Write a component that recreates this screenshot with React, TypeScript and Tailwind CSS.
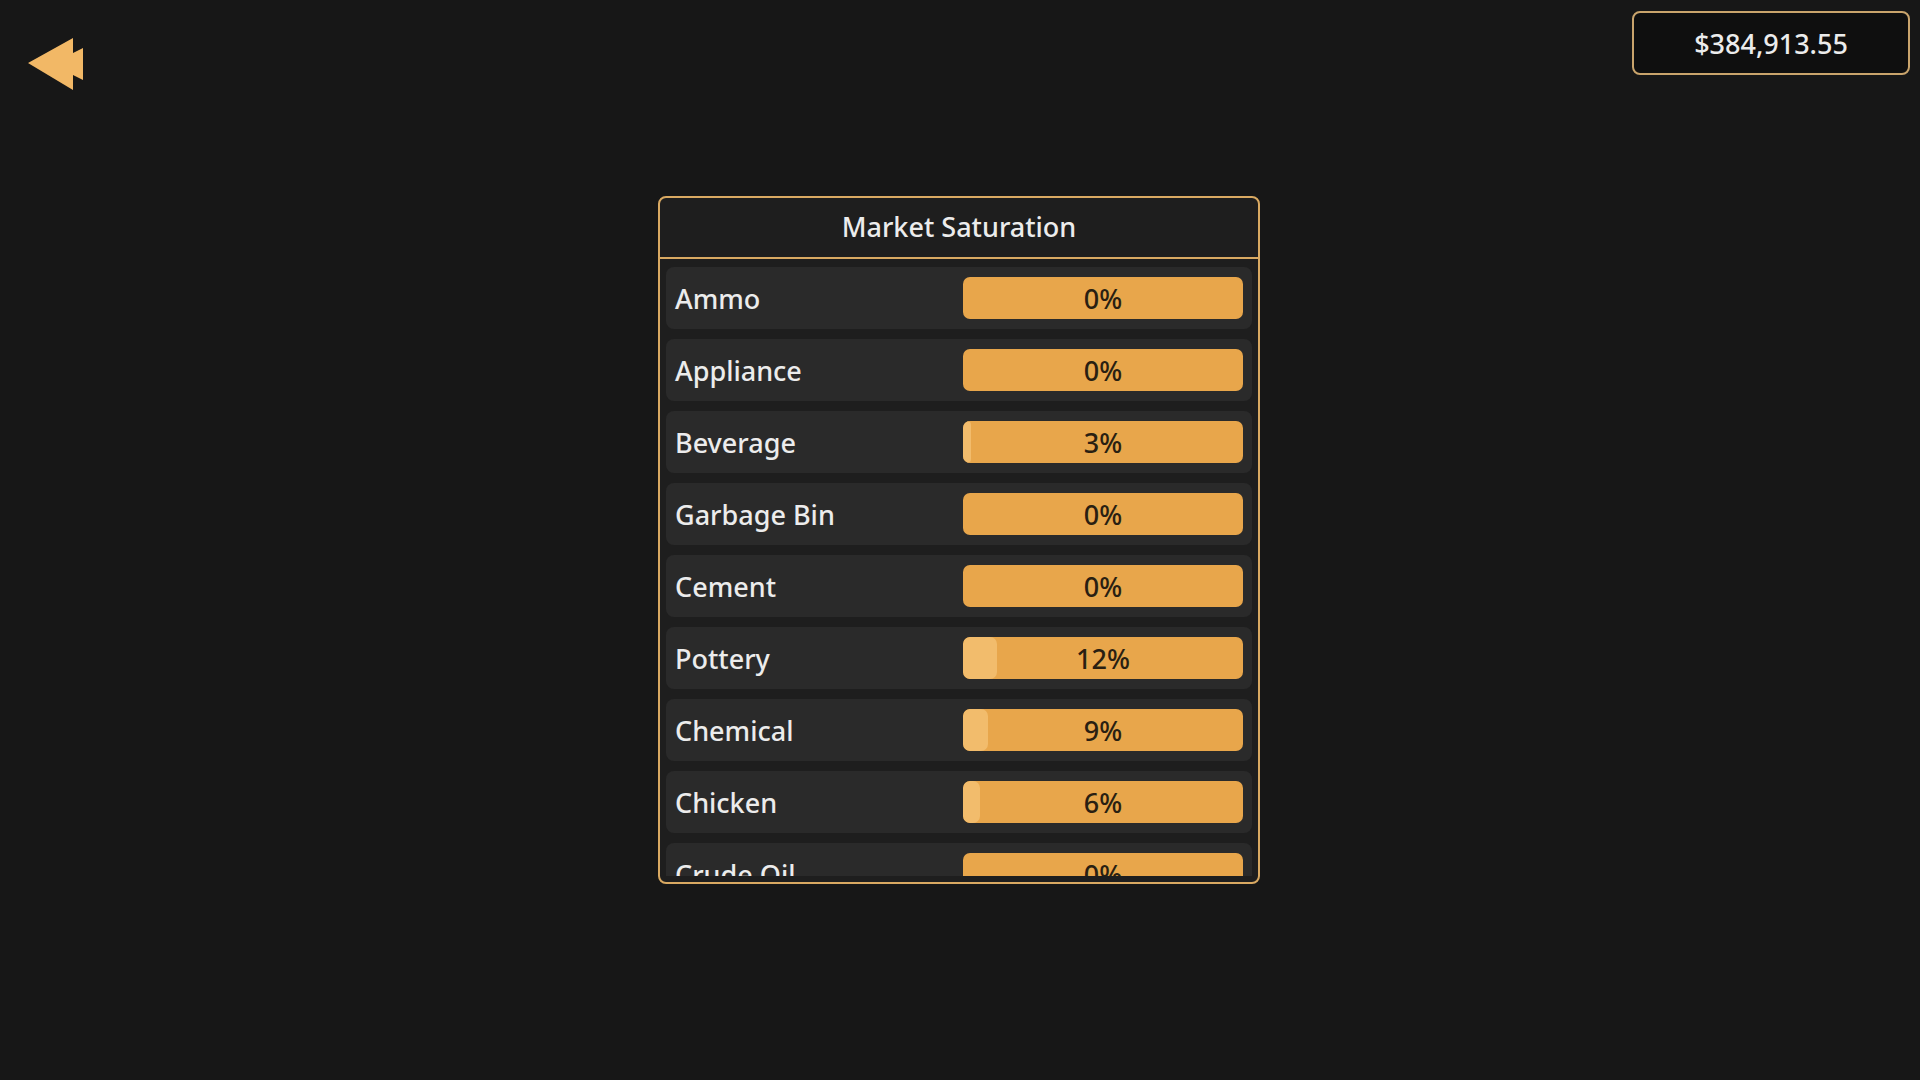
const items = [
  { name: "Ammo", pct: 0 },
  { name: "Appliance", pct: 0 },
  { name: "Beverage", pct: 3 },
  { name: "Garbage Bin", pct: 0 },
  { name: "Cement", pct: 0 },
  { name: "Pottery", pct: 12 },
  { name: "Chemical", pct: 9 },
  { name: "Chicken", pct: 6 },
  { name: "Crude Oil", pct: 0 },
  { name: "Electronics", pct: 0 },
]

function BackArrow() {
  return (
    <svg width="60" height="56" viewBox="0 0 60 56" className="block">
      <polygon
        points="0,25 45,0 45,15 55,10 55,42 45,37 45,52"
        fill="#f2b866"
      />
    </svg>
  )
}

function Row({ name, pct }: { name: string; pct: number }) {
  return (
    <div className="flex h-[62px] shrink-0 items-center justify-between rounded-lg bg-[#2a2a2a] pl-[9px] pr-[9px]">
      <span className="text-[27px] font-medium leading-none text-[#ececec]">{name}</span>
      <div className="relative h-[42px] w-[280px] overflow-hidden rounded-[7px] bg-[#e8a64b]">
        {pct > 0 && (
          <div
            className="absolute inset-y-0 left-0 rounded-[7px] bg-[#f2bc6c]"
            style={{ width: `${pct}%` }}
          />
        )}
        <div className="relative flex h-full items-center justify-center text-[27px] font-medium leading-none text-[#2a1f12]">
          {pct}%
        </div>
      </div>
    </div>
  )
}

export default function App() {
  return (
    <div
      className="flex h-[1080px] w-[1920px] flex-col bg-[#171717]"
      style={{ fontFamily: '"Noto Sans", "Open Sans", sans-serif' }}
    >
      <div className="flex items-start justify-between">
        <div className="pl-[28px] pt-[38px]">
          <BackArrow />
        </div>
        <div className="mr-[10px] mt-[11px] flex h-[64px] w-[278px] items-center justify-center rounded-lg border-2 border-[#c9a46c] bg-[#0f0f0f] pt-[2px] text-[27px] font-medium text-[#ececec]">
          $384,913.55
        </div>
      </div>

      <div className="flex justify-center pt-[102px]">
        <div className="ml-[-2px] flex h-[688px] w-[602px] flex-col rounded-lg border-2 border-[#d9a962] bg-[#1e1e1e]">
          <div className="flex h-[61px] shrink-0 items-center justify-center border-b-2 border-[#d9a962] text-[27px] font-medium text-[#ececec]">
            Market Saturation
          </div>
          <div className="mx-[6px] mb-[6px] mt-[8px] flex flex-1 flex-col gap-[10px] overflow-hidden">
            {items.map((it) => (
              <Row key={it.name} name={it.name} pct={it.pct} />
            ))}
          </div>
        </div>
      </div>
    </div>
  )
}
